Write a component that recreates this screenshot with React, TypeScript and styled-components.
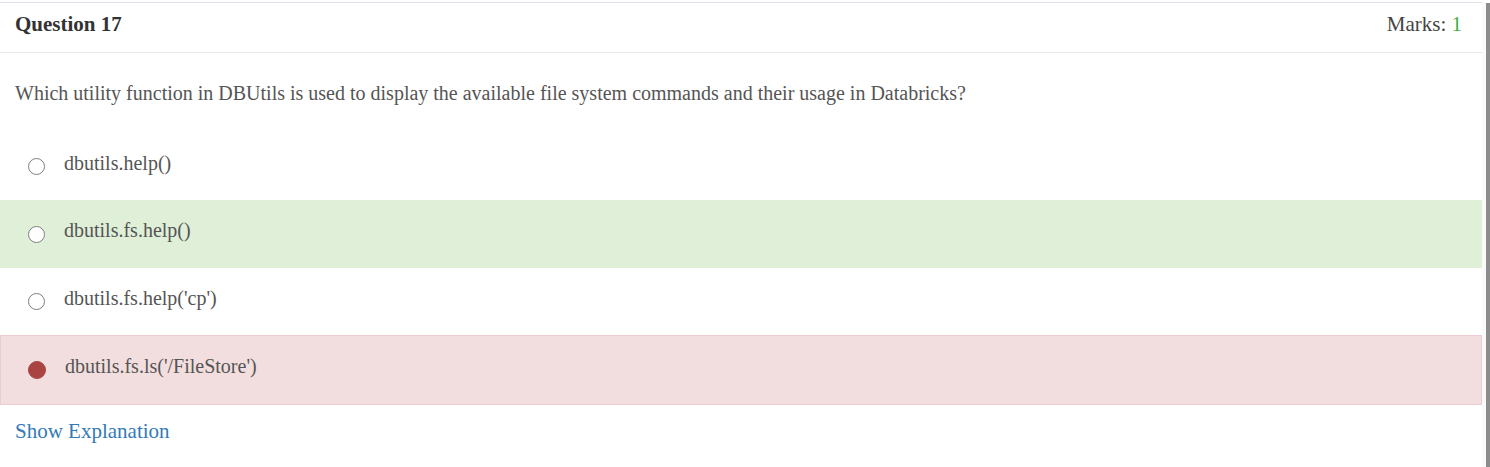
import * as React from "react";
import styled, { createGlobalStyle } from "styled-components";

const Global = createGlobalStyle`
  html, body {
    margin: 0;
    padding: 0;
    background: #ffffff;
  }
  body {
    font-family: "Liberation Serif", "Times New Roman", serif;
    color: #333333;
  }
`;

const Page = styled.div`
  display: flex;
  height: 467px;
  padding-top: 2px;
  box-sizing: border-box;
`;

const Panel = styled.div`
  flex: 1;
  border-top: 1px solid #e2e1ee;
  background: #fff;
`;

const Gutter = styled.div`
  width: 4px;
  background: #fafafa;
`;

const Scroll = styled.div`
  width: 4px;
  margin-top: 1px;
  background: #8c8c8c;
`;

const Header = styled.div`
  display: flex;
  justify-content: space-between;
  align-items: flex-start;
  height: 50px;
  box-sizing: border-box;
  padding: 9px 20px 0 15px;
  border-bottom: 1px solid #e8e8e8;
`;

const Title = styled.h3`
  margin: 0;
  font-size: 21px;
  line-height: 24px;
  font-weight: bold;
  color: #333;
`;

const Marks = styled.span`
  font-size: 21px;
  line-height: 24px;
  color: #444;
`;

const Score = styled.span`
  color: #3cb043;
`;

const QuestionText = styled.p`
  margin: 0;
  padding: 29px 15px 29px;
  font-size: 20px;
  line-height: 22px;
  color: #555;
`;

type Tone = "plain" | "correct" | "wrong";

const rowHeight = { plain: 65, correct: 66, wrong: 68 };

const Option = styled.div<{ $tone: Tone }>`
  display: flex;
  align-items: center;
  gap: 19px;
  height: ${(p) => rowHeight[p.$tone]}px;
  padding: 0 27px;
  background: ${(p) =>
    p.$tone === "correct" ? "#dfefd8" : p.$tone === "wrong" ? "#f2dede" : "transparent"};
  border: 1px solid ${(p) => (p.$tone === "wrong" ? "#ebcccf" : "transparent")};
  font-size: 20px;
  color: #555;
`;

const Radio = styled.span<{ $checked?: boolean }>`
  flex: none;
  width: ${(p) => (p.$checked ? "16px" : "15px")};
  height: ${(p) => (p.$checked ? "16px" : "15px")};
  border-radius: 50%;
  border: ${(p) => (p.$checked ? "1px solid #a94442" : "1.5px solid #7d7d82")};
  background: ${(p) => (p.$checked ? "#a94442" : "#fff")};
`;

const Label = styled.span`
  line-height: 22px;
  margin-top: -8px;
`;

const Explain = styled.a`
  display: inline-block;
  margin: 14px 15px 0;
  font-size: 21px;
  color: #337ab7;
  text-decoration: none;
`;

const options: { text: string; tone: Tone; checked?: boolean }[] = [
  { text: "dbutils.help()", tone: "plain" },
  { text: "dbutils.fs.help()", tone: "correct" },
  { text: "dbutils.fs.help('cp')", tone: "plain" },
  { text: "dbutils.fs.ls('/FileStore')", tone: "wrong", checked: true },
];

export default function App() {
  return (
    <Page>
      <Global />
      <Panel>
        <Header>
          <Title>Question 17</Title>
          <Marks>
            Marks: <Score>1</Score>
          </Marks>
        </Header>
        <QuestionText>
          Which utility function in DBUtils is used to display the available file system commands and their usage in Databricks?
        </QuestionText>
        {options.map((o) => (
          <Option key={o.text} $tone={o.tone}>
            <Radio $checked={o.checked} />
            <Label>{o.text}</Label>
          </Option>
        ))}
        <Explain href="#">Show Explanation</Explain>
      </Panel>
      <Gutter />
      <Scroll />
    </Page>
  );
}
